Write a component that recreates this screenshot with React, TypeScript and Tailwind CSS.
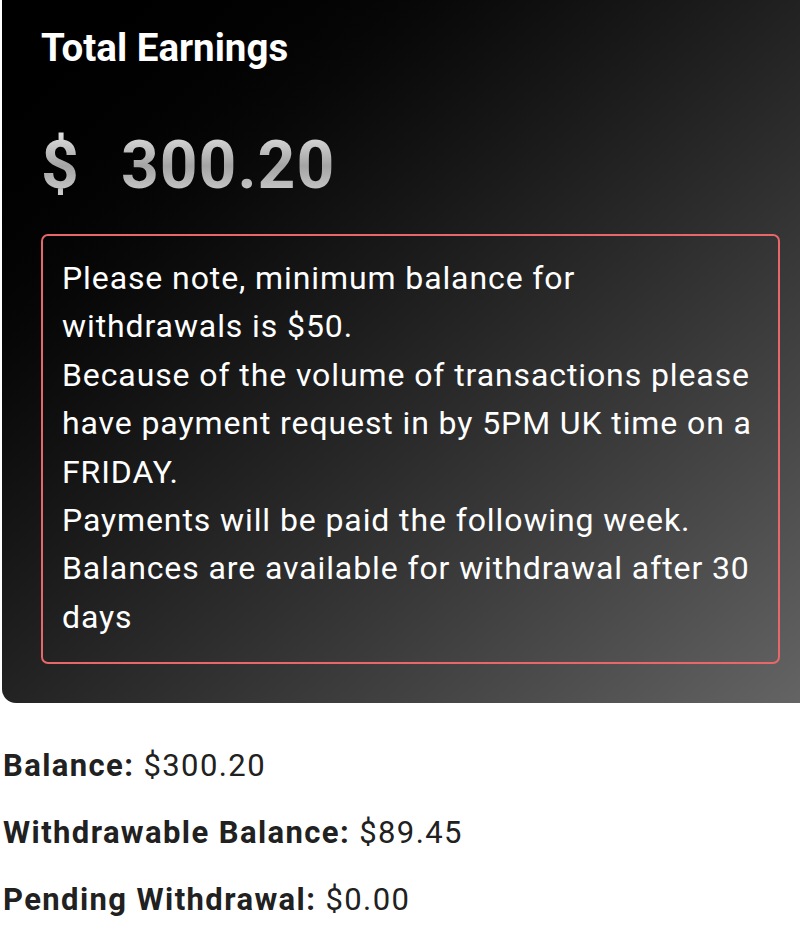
const App = () => {
    return (
        <div className="w-[800px] h-[952px] overflow-hidden bg-white" style={{ fontFamily: 'Roboto, "Liberation Sans", sans-serif' }}>
            {/* Earnings card */}
            <div className="ml-[2px] w-[820px] h-[703px] rounded-bl-[14px] bg-gradient-to-br from-[#000000] via-[#232323] to-[#666666] pl-[39px] pt-[24px]">
                <h1 className="text-[38.5px] leading-[48px] font-bold text-white">Total Earnings</h1>

                <div className="mt-[56px] flex items-baseline text-[66px] leading-[76px] font-bold tracking-[1px]">
                    <span className="bg-gradient-to-b from-[#e8e8e8] via-[#a4a4a4] to-[#dadada] bg-clip-text text-transparent">$</span>
                    <span className="ml-[41px] bg-gradient-to-b from-[#e8e8e8] via-[#a4a4a4] to-[#dadada] bg-clip-text text-transparent">300.20</span>
                </div>

                {/* Notice box */}
                <div className="mt-[30px] w-[739px] h-[430px] border-2 border-[#e8676a] rounded-[7px] pl-[19px] pr-[16px] pt-[18px] text-[32px] leading-[48.4px] tracking-[0.9px] text-white">
                    <p>Please note, minimum balance for withdrawals is $50.</p>
                    <p>Because of the volume of transactions please have payment request in by 5PM UK time on a FRIDAY.</p>
                    <p>Payments will be paid the following week.</p>
                    <p>Balances are available for withdrawal after 30 days</p>
                </div>
            </div>

            {/* Balances */}
            <div className="pl-[3px] pt-[44px] flex flex-col gap-[30px] text-[31px] leading-[37px] tracking-[1.4px] text-[#212121]">
                <p><span className="font-bold">Balance:</span> $300.20</p>
                <p><span className="font-bold">Withdrawable Balance:</span> $89.45</p>
                <p><span className="font-bold">Pending Withdrawal:</span> $0.00</p>
            </div>
        </div>
    );
};

export default App;
